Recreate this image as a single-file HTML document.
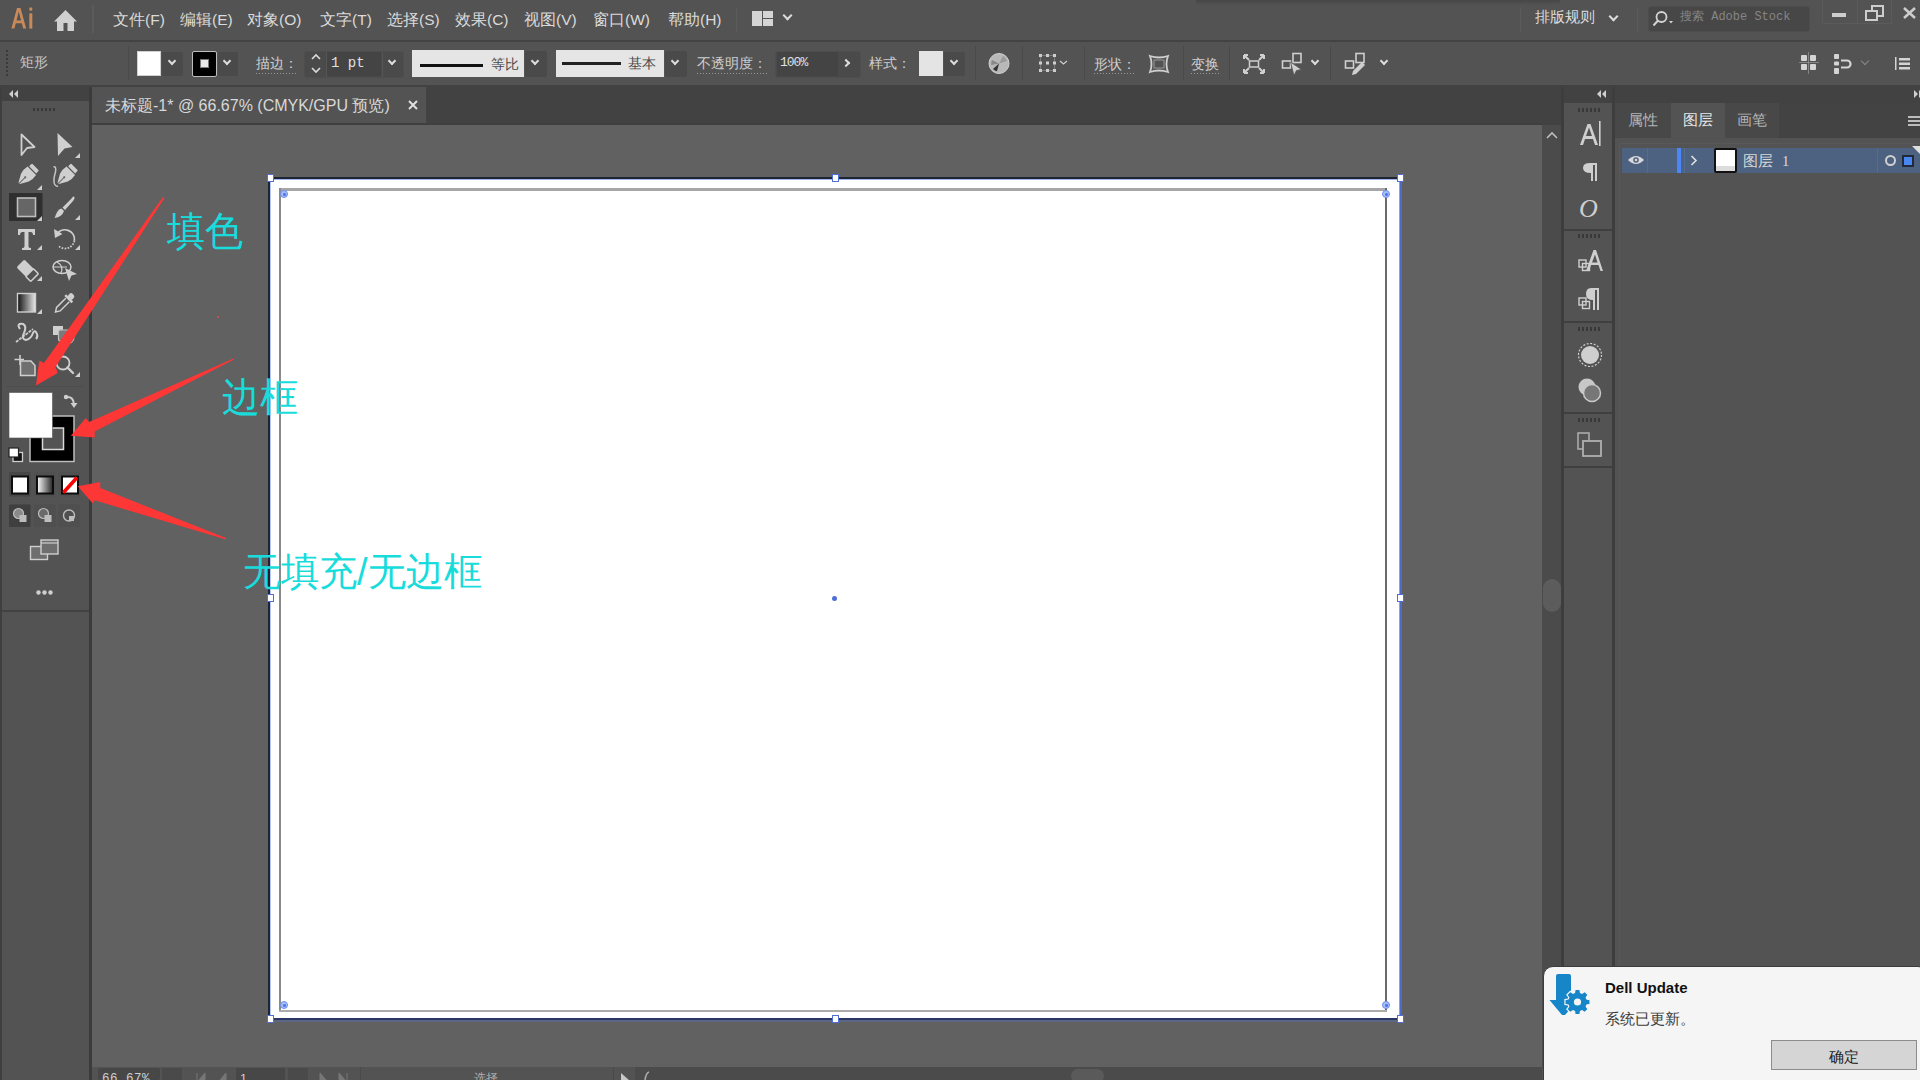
<!DOCTYPE html>
<html><head><meta charset="utf-8">
<style>
*{margin:0;padding:0;box-sizing:border-box}
html,body{width:1920px;height:1080px;overflow:hidden;background:#535353;font-family:"Liberation Sans",sans-serif;color:#d4d4d4}
.a{position:absolute}
.t{position:absolute;white-space:nowrap;line-height:1}
.sep{position:absolute;width:1px;background:#474747}
.chev{position:absolute;width:7px;height:7px;border-right:2px solid #dcdcdc;border-bottom:2px solid #dcdcdc;transform:rotate(45deg)}
.dd{position:absolute;background:#4a4a4a;border-radius:2px}
svg{position:absolute;overflow:visible}
</style></head><body>

<!-- ===== MENU BAR ===== -->
<div class="a" style="left:0;top:0;width:1920px;height:40px;background:#535353"></div>
<div class="a" style="left:1196px;top:0;width:364px;height:5px;background:linear-gradient(#464646,#535353);border-radius:0 0 4px 4px"></div>
<div class="a" style="left:0;top:40px;width:1920px;height:2px;background:#434343"></div>


<!-- menu content -->
<svg style="left:0;top:0" width="40" height="36" viewBox="0 0 40 36"><path d="M17 8 H20.5 L26.2 28.6 H23.2 L21.8 23.2 H15.8 L14.4 28.6 H11.4 Z M16.5 20.6 H21.1 L18.8 11.5 Z" fill="#c98a5a"/><rect x="29.3" y="13.3" width="3" height="15.3" fill="#c98a5a"/><rect x="29.3" y="7.6" width="3" height="3.2" rx="1" fill="#c98a5a"/></svg>
<svg style="left:54px;top:10px" width="23" height="22" viewBox="0 0 23 22"><path d="M11.5 0 L23 11.5 L20 11.5 L20 21 L13.5 21 L13.5 13 L9.5 13 L9.5 21 L3 21 L3 11.5 L0 11.5 Z" fill="#d0d0d0"/></svg>
<div class="a" style="left:92px;top:5px;width:2px;height:28px;background:#5b5b5b"></div>
<div class="t" style="left:113px;top:12px;font-size:15.5px;color:#dadada">文件(F)</div>
<div class="t" style="left:180px;top:12px;font-size:15.5px;color:#dadada">编辑(E)</div>
<div class="t" style="left:247px;top:12px;font-size:15.5px;color:#dadada">对象(O)</div>
<div class="t" style="left:320px;top:12px;font-size:15.5px;color:#dadada">文字(T)</div>
<div class="t" style="left:387px;top:12px;font-size:15.5px;color:#dadada">选择(S)</div>
<div class="t" style="left:455px;top:12px;font-size:15.5px;color:#dadada">效果(C)</div>
<div class="t" style="left:524px;top:12px;font-size:15.5px;color:#dadada">视图(V)</div>
<div class="t" style="left:593px;top:12px;font-size:15.5px;color:#dadada">窗口(W)</div>
<div class="t" style="left:668px;top:12px;font-size:15.5px;color:#dadada">帮助(H)</div>
<div class="a" style="left:736px;top:7px;width:1px;height:26px;background:#5b5b5b"></div>
<div class="a" style="left:752px;top:11px;width:10px;height:15px;background:#d4d4d4"></div>
<div class="a" style="left:763px;top:11px;width:10px;height:7px;background:#d4d4d4"></div>
<div class="a" style="left:763px;top:19px;width:10px;height:7px;background:#d4d4d4"></div>
<div class="chev" style="left:784px;top:12px"></div>
<div class="t" style="left:1535px;top:9px;font-size:15px;color:#dcdcdc">排版规则</div>
<div class="chev" style="left:1610px;top:13px"></div>
<div class="a" style="left:1520px;top:7px;width:1px;height:26px;background:#5b5b5b"></div>
<div class="a" style="left:1637px;top:7px;width:1px;height:26px;background:#5b5b5b"></div>
<div class="a" style="left:1648px;top:6px;width:162px;height:26px;background:#474747;border:1px solid #4d4d4d;border-radius:3px"></div>
<svg style="left:1652px;top:10px" width="22" height="18" viewBox="0 0 22 18"><circle cx="9.5" cy="7" r="5" fill="none" stroke="#d4d4d4" stroke-width="1.8"/><path d="M6 10.5 L1.5 15.5" stroke="#d4d4d4" stroke-width="2"/><path d="M17 11 L21 11 L19 13.5 Z" fill="#d4d4d4"/></svg>
<div class="t" style="left:1680px;top:11px;font-size:12px;color:#858585;font-family:'Liberation Mono',monospace">搜索 Adobe Stock</div>
<div class="a" style="left:1822px;top:0px;width:70px;height:24px;border:1px solid #5b5b5b;border-top:none;border-radius:0 0 3px 3px"></div>
<div class="a" style="left:1857px;top:0px;width:1px;height:24px;background:#5b5b5b"></div>
<div class="a" style="left:1891px;top:0px;width:1px;height:24px;background:#5b5b5b"></div>
<div class="a" style="left:1832px;top:13px;width:14px;height:4px;background:#cdcdcd"></div>
<div class="a" style="left:1871px;top:5px;width:13px;height:12px;border:2.5px solid #cdcdcd"></div>
<div class="a" style="left:1865px;top:10px;width:13px;height:11px;border:2.5px solid #cdcdcd;background:#535353"></div>
<svg style="left:1903px;top:7px" width="13" height="12" viewBox="0 0 13 12"><path d="M1 1 L12 11 M12 1 L1 11" stroke="#cdcdcd" stroke-width="2.5"/></svg>

<!-- CONTROL BAR -->
<div class="a" style="left:0;top:42px;width:1920px;height:43px;background:#535353"></div>
<div class="a" style="left:0;top:85px;width:1920px;height:2px;background:#424242"></div>


<!-- control content -->
<div class="a" style="left:6px;top:50px;width:2px;height:27px;background:repeating-linear-gradient(#3a3a3a 0 2px,transparent 2px 4px)"></div>
<div class="t" style="left:20px;top:55px;font-size:14px;color:#c8c8c8">矩形</div>
<div class="a" style="left:128px;top:46px;width:1px;height:34px;background:#4b4b4b"></div>
<div class="a" style="left:137px;top:51px;width:24px;height:25px;background:#ffffff;border:1px solid #d0d0d0"></div>
<div class="dd" style="left:162px;top:52px;width:21px;height:24px"></div>
<div class="chev" style="left:169px;top:58px;width:6px;height:6px"></div>
<div class="a" style="left:192px;top:51px;width:25px;height:26px;background:#000;border:1.5px solid #bdbdbd;border-radius:2px"></div>
<div class="a" style="left:200px;top:59px;width:9px;height:9px;background:#e8e8e8;border:1.5px solid #777"></div>
<div class="dd" style="left:218px;top:52px;width:20px;height:24px"></div>
<div class="chev" style="left:224px;top:58px;width:6px;height:6px"></div>

<div class="t" style="left:256px;top:56px;font-size:14px;color:#cfcfcf">描边：</div>
<div class="a" style="left:256px;top:73px;width:42px;height:1px;background:repeating-linear-gradient(90deg,#9a9a9a 0 1px,transparent 1px 3px)"></div>
<div class="a" style="left:304px;top:51px;width:100px;height:27px;background:#4a4a4a;border:1px solid #4e4e4e;border-radius:3px"></div>
<div class="a" style="left:326px;top:52px;width:1px;height:25px;background:#555"></div>
<div class="a" style="left:327px;top:52px;width:54px;height:24px;background:#444"></div>
<div class="a" style="left:382px;top:52px;width:1px;height:25px;background:#555"></div>
<svg style="left:310px;top:53px" width="12" height="21" viewBox="0 0 12 21"><path d="M2 6 L6 2 L10 6 M2 15 L6 19 L10 15" fill="none" stroke="#dcdcdc" stroke-width="1.6"/></svg>
<div class="t" style="left:331px;top:56px;font-size:14px;color:#e0e0e0;font-family:'Liberation Mono',monospace">1 pt</div>
<div class="chev" style="left:389px;top:58px;width:6px;height:6px"></div>

<div class="a" style="left:412px;top:50px;width:112px;height:27px;background:#e5e5e5"></div>
<div class="a" style="left:420px;top:64px;width:63px;height:3px;background:#111"></div>
<div class="t" style="left:491px;top:57px;font-size:14px;color:#4a4a4a">等比</div>
<div class="dd" style="left:525px;top:51px;width:22px;height:26px"></div>
<div class="chev" style="left:532px;top:58px;width:6px;height:6px"></div>
<div class="a" style="left:556px;top:50px;width:108px;height:27px;background:#e5e5e5"></div>
<div class="a" style="left:562px;top:62px;width:59px;height:3px;background:#222"></div>
<div class="t" style="left:628px;top:56px;font-size:14px;color:#4a4a4a">基本</div>
<div class="dd" style="left:665px;top:51px;width:22px;height:26px"></div>
<div class="chev" style="left:672px;top:58px;width:6px;height:6px"></div>

<div class="t" style="left:697px;top:56px;font-size:14px;color:#cfcfcf">不透明度：</div>
<div class="a" style="left:697px;top:73px;width:70px;height:1px;background:repeating-linear-gradient(90deg,#9a9a9a 0 1px,transparent 1px 3px)"></div>
<div class="a" style="left:775px;top:51px;width:86px;height:27px;background:#4a4a4a;border:1px solid #4e4e4e;border-radius:3px"></div>
<div class="a" style="left:777px;top:52px;width:61px;height:24px;background:#444"></div>
<div class="t" style="left:780px;top:56px;font-size:13px;color:#e0e0e0;font-family:'Liberation Mono',monospace;letter-spacing:-1px">100%</div>
<div class="chev" style="left:843px;top:60px;width:6px;height:6px;transform:rotate(-45deg)"></div>
<div class="t" style="left:869px;top:56px;font-size:14px;color:#cfcfcf">样式：</div>
<div class="a" style="left:919px;top:51px;width:24px;height:25px;background:#e4e4e4"></div>
<div class="dd" style="left:944px;top:52px;width:21px;height:24px"></div>
<div class="chev" style="left:951px;top:58px;width:6px;height:6px"></div>
<div class="a" style="left:975px;top:46px;width:1px;height:34px;background:#4a4a4a"></div>
<svg style="left:988px;top:52px" width="22" height="23" viewBox="0 0 22 23"><circle cx="11" cy="11.5" r="10" fill="#b8b8b8" stroke="#d0d0d0" stroke-width="1"/><path d="M11 11.5 L5 17 A8 8 0 0 0 9 19.3 Z" fill="#333"/><path d="M11 11.5 L4 8 A8 8 0 0 0 3.2 13 Z" fill="#888"/><path d="M11 11.5 L15 4 A8 8 0 0 1 19 9 Z" fill="#9a9a9a"/></svg>
<div class="a" style="left:1022px;top:46px;width:1px;height:34px;background:#4a4a4a"></div>
<svg style="left:1038px;top:53px" width="32" height="21" viewBox="0 0 32 21"><g fill="#d0d0d0"><rect x="1" y="1" width="3" height="3"/><rect x="8" y="1" width="3" height="3"/><rect x="15" y="1" width="3" height="3"/><rect x="1" y="8.5" width="3" height="3"/><rect x="8" y="8.5" width="3" height="3"/><rect x="15" y="8.5" width="3" height="3"/><rect x="1" y="16" width="3" height="3"/><rect x="8" y="16" width="3" height="3"/><rect x="15" y="16" width="3" height="3"/></g><path d="M2.5 2.5 H16.5 V17.5 H2.5 Z" fill="none" stroke="#bdbdbd" stroke-width="0.8" stroke-dasharray="1 1"/><path d="M22 8 L25.5 11 L29 8" fill="none" stroke="#cfcfcf" stroke-width="1.2"/></svg>
<div class="a" style="left:1084px;top:46px;width:1px;height:34px;background:#4a4a4a"></div>
<div class="t" style="left:1094px;top:57px;font-size:14px;color:#cfcfcf">形状：</div>
<div class="a" style="left:1094px;top:73px;width:42px;height:1px;background:repeating-linear-gradient(90deg,#9a9a9a 0 1px,transparent 1px 3px)"></div>
<svg style="left:1148px;top:54px" width="22" height="20" viewBox="0 0 22 20"><path d="M2 2 Q11 5 20 2 Q17 10 20 18 Q11 15 2 18 Q5 10 2 2 Z" fill="none" stroke="#cfcfcf" stroke-width="1.8"/><rect x="6" y="6" width="10" height="8" fill="none" stroke="#999" stroke-width="1"/></svg>
<div class="a" style="left:1183px;top:46px;width:1px;height:34px;background:#4a4a4a"></div>
<div class="t" style="left:1191px;top:57px;font-size:14px;color:#cfcfcf">变换</div>
<div class="a" style="left:1191px;top:73px;width:30px;height:1px;background:repeating-linear-gradient(90deg,#9a9a9a 0 1px,transparent 1px 3px)"></div>
<div class="a" style="left:1229px;top:46px;width:1px;height:34px;background:#4a4a4a"></div>
<svg style="left:1243px;top:54px" width="22" height="20" viewBox="0 0 22 20"><g stroke="#d0d0d0" stroke-width="2" fill="none"><path d="M1 1 L6 6 M1 1 V5 M1 1 H5"/><path d="M21 1 L16 6 M21 1 V5 M21 1 H17"/><path d="M1 19 L6 14 M1 19 V15 M1 19 H5"/><path d="M21 19 L16 14 M21 19 V15 M21 19 H17"/></g><rect x="6.5" y="7" width="9" height="6" fill="none" stroke="#cfcfcf" stroke-width="1.5"/></svg>
<svg style="left:1281px;top:52px" width="26" height="24" viewBox="0 0 26 24"><rect x="1.5" y="9" width="8" height="7" fill="none" stroke="#cfcfcf" stroke-width="1.6"/><rect x="12" y="1.5" width="8" height="9" fill="none" stroke="#cfcfcf" stroke-width="1.6"/><path d="M9.5 10 L20.5 17.5 L15.5 18.5 L13 23.5 Z" fill="#cfcfcf" stroke="#535353" stroke-width="0.8"/></svg>
<div class="chev" style="left:1312px;top:58px;width:6px;height:6px"></div>
<div class="a" style="left:1330px;top:46px;width:1px;height:34px;background:#4a4a4a"></div>
<svg style="left:1344px;top:52px" width="24" height="24" viewBox="0 0 24 24"><rect x="1.5" y="9" width="8" height="7" fill="none" stroke="#cfcfcf" stroke-width="1.6"/><rect x="12" y="1.5" width="8" height="9" fill="none" stroke="#cfcfcf" stroke-width="1.6"/><path d="M18 10 L21 13 L12 22 L8 23 L9 19 Z" fill="#cfcfcf"/></svg>
<div class="chev" style="left:1381px;top:58px;width:6px;height:6px"></div>

<svg style="left:1799px;top:52px" width="20" height="22" viewBox="0 0 20 22"><g fill="#d4d4d4"><rect x="2" y="3" width="6" height="6" rx="1"/><rect x="11" y="3" width="6" height="6" rx="1"/><rect x="2" y="12" width="6" height="6" rx="1"/><rect x="11" y="12" width="6" height="6" rx="1"/></g><path d="M9.5 0 V22 M0 10.5 H20" stroke="#8f8f8f" stroke-width="0.8"/></svg>
<svg style="left:1833px;top:53px" width="22" height="22" viewBox="0 0 22 22"><g fill="#d4d4d4"><rect x="1" y="1" width="5" height="5" rx="1"/><rect x="1" y="8.5" width="5" height="4" rx="1"/><rect x="1" y="15" width="5" height="6" rx="1"/></g><path d="M8 7.5 H14 A3.5 3.5 0 0 1 14 14.5 H8" fill="none" stroke="#d4d4d4" stroke-width="2.2"/></svg>
<div class="chev" style="left:1862px;top:58px;width:6px;height:6px;border-color:#8a8a8a;border-width:1px"></div>
<svg style="left:1894px;top:57px" width="16" height="14" viewBox="0 0 16 14"><g fill="#d4d4d4"><rect x="5" y="1" width="11" height="2.5"/><rect x="5" y="5.5" width="11" height="2.5"/><rect x="5" y="10" width="11" height="2.5"/><rect x="1" y="0" width="1.5" height="13"/></g></svg>

<!-- TAB BAR / DARK STRIP -->
<div class="a" style="left:0;top:87px;width:1920px;height:38px;background:#424242"></div>


<!-- tab -->
<div class="a" style="left:92px;top:87px;width:334px;height:36px;background:#535353"></div>
<div class="a" style="left:92px;top:123px;width:1450px;height:2px;background:#3f3f3f"></div>
<div class="t" style="left:105px;top:98px;font-size:16px;color:#d8d8d8">未标题-1* @ 66.67% (CMYK/GPU 预览)</div>
<svg style="left:408px;top:100px" width="10" height="10" viewBox="0 0 10 10"><path d="M1 1 L9 9 M9 1 L1 9" stroke="#e0e0e0" stroke-width="2"/></svg>
<svg style="left:9px;top:90px" width="10" height="8" viewBox="0 0 10 8"><path d="M4 0 L0 4 L4 8 Z M9 0 L5 4 L9 8 Z" fill="#cfcfcf"/></svg>

<svg style="left:1597px;top:90px" width="10" height="8" viewBox="0 0 10 8"><path d="M4 0 L0 4 L4 8 Z M9 0 L5 4 L9 8 Z" fill="#cfcfcf"/></svg>
<svg style="left:1913px;top:90px" width="10" height="8" viewBox="0 0 10 8"><path d="M1 0 L5 4 L1 8 Z M6 0 L10 4 L6 8 Z" fill="#cfcfcf"/></svg>

<!-- CANVAS -->
<div class="a" style="left:92px;top:125px;width:1450px;height:942px;background:#616161"></div>


<!-- artboard -->
<div class="a" style="left:270px;top:179px;width:1130px;height:840px;background:#fff"></div>
<div class="a" style="left:268px;top:177px;width:1132px;height:2px;background:#1f2433"></div>
<div class="a" style="left:270px;top:179px;width:1129px;height:1px;background:#9fb4ef"></div>
<div class="a" style="left:268px;top:177px;width:2px;height:843px;background:#1f2433"></div>
<div class="a" style="left:270px;top:180px;width:1px;height:838px;background:#b8c8f5"></div>
<div class="a" style="left:1399px;top:177px;width:1px;height:843px;background:#8ea3de"></div><div class="a" style="left:1400px;top:177px;width:2px;height:843px;background:#4d6bc4"></div>
<div class="a" style="left:268px;top:1018px;width:1134px;height:2px;background:#2a3766"></div>
<div class="a" style="left:268px;top:1020px;width:1134px;height:2px;background:#5d6784"></div>
<!-- rectangle stroke -->
<div class="a" style="left:279px;top:188px;width:1108px;height:3px;background:#a6a6a6"></div>
<div class="a" style="left:279px;top:188px;width:2px;height:824px;background:#8a8a8a"></div>
<div class="a" style="left:1385px;top:188px;width:2px;height:824px;background:#6a6a6a"></div>
<div class="a" style="left:279px;top:1010px;width:1108px;height:2px;background:#ababab"></div>
<!-- live corners -->
<div class="a" style="left:280px;top:190px;width:8px;height:8px;border-radius:50%;background:#a9bdf7;border:1.6px solid #6a8df2"></div><div class="a" style="left:283px;top:193px;width:2.5px;height:2.5px;border-radius:50%;background:#4f78ee"></div>
<div class="a" style="left:1382px;top:190px;width:8px;height:8px;border-radius:50%;background:#a9bdf7;border:1.6px solid #6a8df2"></div><div class="a" style="left:1385px;top:193px;width:2.5px;height:2.5px;border-radius:50%;background:#4f78ee"></div>
<div class="a" style="left:280px;top:1001px;width:8px;height:8px;border-radius:50%;background:#a9bdf7;border:1.6px solid #6a8df2"></div><div class="a" style="left:283px;top:1004px;width:2.5px;height:2.5px;border-radius:50%;background:#4f78ee"></div>
<div class="a" style="left:1382px;top:1001px;width:8px;height:8px;border-radius:50%;background:#a9bdf7;border:1.6px solid #6a8df2"></div><div class="a" style="left:1385px;top:1004px;width:2.5px;height:2.5px;border-radius:50%;background:#4f78ee"></div>
<!-- handles -->
<div class="a" style="left:267px;top:174px;width:7px;height:8px;background:#fff;border:1.5px solid #4f6fd6"></div>
<div class="a" style="left:832px;top:174px;width:7px;height:8px;background:#fff;border:1.5px solid #4f6fd6"></div>
<div class="a" style="left:1397px;top:174px;width:7px;height:8px;background:#fff;border:1.5px solid #4f6fd6"></div>
<div class="a" style="left:267px;top:594px;width:7px;height:8px;background:#fff;border:1.5px solid #4f6fd6"></div>
<div class="a" style="left:1397px;top:594px;width:7px;height:8px;background:#fff;border:1.5px solid #4f6fd6"></div>
<div class="a" style="left:267px;top:1015px;width:7px;height:8px;background:#fff;border:1.5px solid #4f6fd6"></div>
<div class="a" style="left:832px;top:1015px;width:7px;height:8px;background:#fff;border:1.5px solid #4f6fd6"></div>
<div class="a" style="left:1397px;top:1015px;width:7px;height:8px;background:#fff;border:1.5px solid #4f6fd6"></div>
<div class="a" style="left:832px;top:596px;width:5px;height:5px;border-radius:50%;background:#4f6fd6"></div>
<div class="a" style="left:217px;top:316px;width:2px;height:2px;border-radius:50%;background:#e04a4a"></div>

<!-- annotations -->
<div class="t" style="left:167px;top:211px;font-size:38px;color:#18dcdc;transform:scaleY(1.05);transform-origin:0 0">填色</div>
<div class="t" style="left:222px;top:377px;font-size:38px;color:#18dcdc;transform:scaleY(1.05);transform-origin:0 0">边框</div>
<div class="t" style="left:243px;top:552px;font-size:38px;color:#18dcdc;transform:scaleY(1.02);transform-origin:0 0">无填充/无边框</div>

<!-- LEFT TOOLBAR -->
<div class="a" style="left:0;top:87px;width:2px;height:993px;background:#3f3f3f"></div>
<div class="a" style="left:2px;top:101px;width:87px;height:979px;background:#535353"></div>
<div class="a" style="left:89px;top:87px;width:3px;height:993px;background:#3b3b3b"></div>
<div class="a" style="left:2px;top:610px;width:87px;height:2px;background:#424242"></div>


<!-- toolbar icons -->
<div class="a" style="left:33px;top:108px;width:24px;height:3px;background:repeating-linear-gradient(90deg,#383838 0 2px,transparent 2px 4px)"></div>
<svg style="left:0;top:100px" width="92" height="512" viewBox="0 100 92 512">
<g fill="#cfcfcf" stroke="none">
<!-- corner triangles -->
<path d="M80 153 L80 158 L75 158 Z"/>
<path d="M42 185 L42 190 L37 190 Z"/>
<path d="M80 215 L80 220 L75 220 Z"/>
<path d="M42 245 L42 250 L37 250 Z"/>
<path d="M80 245 L80 250 L75 250 Z"/>
<path d="M42 276 L42 281 L37 281 Z"/>
<path d="M42 309 L42 314 L37 314 Z"/>
<path d="M80 372 L80 377 L75 377 Z"/>
</g>
<!-- selection hollow -->
<path d="M21.5 134.5 L34.5 147 L27 148 L21.5 155 Z" fill="none" stroke="#cfcfcf" stroke-width="1.8" stroke-linejoin="round"/>
<!-- direct selection filled -->
<path d="M57.5 133 L72.5 147 L64.5 148.5 L58 156 Z" fill="#cfcfcf"/>
<!-- pen -->
<g transform="translate(27 175.5) rotate(45)"><path d="M-4.2 -12 H4.2 Q5 -12 5 -10.5 V-8 H-5 V-10.5 Q-5 -12 -4.2 -12 Z M-6 -6.8 H6 Q7.2 -1 5.5 3 L1 11 H-1 L-5.5 3 Q-7.2 -1 -6 -6.8 Z" fill="#cfcfcf"/><path d="M0 11 V3" stroke="#6a6a6a" stroke-width="1"/><circle cx="0" cy="2.5" r="1.1" fill="#6a6a6a"/></g>
<!-- curvature -->
<g transform="translate(66 175.5) rotate(45)"><path d="M-4.2 -12 H4.2 Q5 -12 5 -10.5 V-8 H-5 V-10.5 Q-5 -12 -4.2 -12 Z M-6 -6.8 H6 Q7.2 -1 5.5 3 L1 11 H-1 L-5.5 3 Q-7.2 -1 -6 -6.8 Z" fill="#cfcfcf"/><path d="M0 11 V3" stroke="#6a6a6a" stroke-width="1"/><circle cx="0" cy="2.5" r="1.1" fill="#6a6a6a"/></g>
<path d="M53.5 167 Q56.5 166 55.5 172 Q53 180 54.5 184 Q56 187 58 186" fill="none" stroke="#c4c4c4" stroke-width="1.5"/>
<!-- rect tool highlighted -->
<rect x="9" y="193" width="33.5" height="28" fill="#2f2f2f"/>
<path d="M42 216 L42 221 L37 221 Z" fill="#cfcfcf"/>
<rect x="17.5" y="198" width="18" height="18.5" fill="#666" stroke="#bdbdbd" stroke-width="1.6"/>
<!-- paintbrush -->
<path d="M74 196.5 Q75.5 198 73 201 L65 210 L62.5 207.5 L71.5 198.5 Q73 196 74 196.5 Z" fill="#cfcfcf"/>
<path d="M61.5 208.5 L64 211 Q62 217 54.5 218 Q56 214 57.5 211.5 Q59 209 61.5 208.5 Z" fill="#cfcfcf"/>
<!-- type T -->
<path d="M18 229 H35 V235 H33 Q33 232 30.5 232 H28.5 V246.5 Q28.5 248 31 248 V250 H22 V248 Q24.5 248 24.5 246.5 V232 H22.5 Q20 232 20 235 H18 Z" fill="#cfcfcf"/>
<!-- rotate -->
<path d="M57.5 233.5 A9.5 9.5 0 0 1 74.4 240.6" fill="none" stroke="#cfcfcf" stroke-width="1.8"/><path d="M74.4 240.6 A9.5 9.5 0 0 1 58.9 246.3" fill="none" stroke="#cfcfcf" stroke-width="1.8" stroke-dasharray="1.6 1.4"/>
<path d="M54 229 L55 238 L62.5 234 Z" fill="#cfcfcf"/>
<!-- eraser -->
<g transform="translate(27.5 270.5) rotate(-45)"><rect x="-5.5" y="-10" width="11" height="20" rx="1.5" fill="#cfcfcf"/><rect x="-5.5" y="3" width="11" height="7" rx="1" fill="#535353" stroke="#cfcfcf" stroke-width="1.5"/></g>
<!-- shape builder -->
<ellipse cx="62" cy="267" rx="9" ry="6.5" fill="none" stroke="#cfcfcf" stroke-width="1.5"/>
<path d="M57 262 Q64 266 61 273 M53 267 H67" fill="none" stroke="#cfcfcf" stroke-width="1.2"/>
<path d="M65 268 L77 274 L71.5 275.5 L69 281 Z" fill="#cfcfcf"/>
<!-- gradient -->
<defs><linearGradient id="gr" x1="0" x2="1"><stop offset="0" stop-color="#111"/><stop offset="1" stop-color="#e8e8e8"/></linearGradient>
<linearGradient id="gr2" x1="0" x2="1"><stop offset="0" stop-color="#fff"/><stop offset="1" stop-color="#222"/></linearGradient></defs>
<rect x="17.5" y="293.5" width="18" height="18.5" fill="url(#gr)" stroke="#cfcfcf" stroke-width="1.4"/>
<!-- eyedropper -->
<g transform="translate(64 303.5) rotate(45)"><rect x="-3" y="-13" width="6" height="6" rx="2.5" fill="#cfcfcf"/><rect x="-5" y="-8" width="10" height="2.5" fill="#cfcfcf"/><path d="M-2.5 -5 V8 L0 12 L2.5 8 V-5" fill="none" stroke="#cfcfcf" stroke-width="1.5"/></g>
<!-- puppet warp -->
<path d="M20 329 Q16 323 23 324 Q27 326 24 333 Q21 339 26 340 Q31 339 33 333 Q35 329 37 334 Q38 337 36 339" fill="none" stroke="#cfcfcf" stroke-width="2"/>
<path d="M16 342 L33 329" stroke="#cfcfcf" stroke-width="1.8" stroke-dasharray="3 1"/>
<!-- live paint bucket -->
<rect x="53" y="326" width="10" height="9" fill="#cfcfcf"/>
<rect x="58.5" y="330" width="12" height="11" rx="2" fill="#7a7a7a" stroke="#bdbdbd" stroke-width="1.2"/>
<path d="M66 343 A6 6 0 0 0 74 337" fill="none" stroke="#bdbdbd" stroke-width="1.2"/>
<!-- artboard -->
<path d="M14.5 359.5 H24 M20 355 V365" stroke="#cfcfcf" stroke-width="1.6"/>
<path d="M20.5 361 H31 L35 365.5 V375.5 H20.5 Z" fill="#707070" stroke="#cfcfcf" stroke-width="1.5"/>
<!-- zoom -->
<circle cx="63" cy="363" r="6.5" fill="none" stroke="#cfcfcf" stroke-width="1.8"/>
<path d="M67.5 367.5 L73 373" stroke="#cfcfcf" stroke-width="2.4" stroke-linecap="round"/>
<!-- separator -->
<rect x="6" y="386" width="77" height="1" fill="#4c4c4c"/>
<!-- fill / stroke -->
<rect x="30" y="416" width="44" height="45.5" fill="#000" stroke="#bdbdbd" stroke-width="1.5"/>
<rect x="42.5" y="428" width="21" height="21.5" fill="#535353" stroke="#d8d8d8" stroke-width="1.5"/>
<rect x="9" y="392.5" width="43.5" height="45.5" fill="#fff" stroke="#555" stroke-width="0.6"/>
<!-- swap -->
<path d="M66.5 397 Q73 396 74 404" fill="none" stroke="#cfcfcf" stroke-width="2"/>
<circle cx="66" cy="397" r="2.2" fill="#cfcfcf"/>
<path d="M70.5 403 L77.5 403 L74 408 Z" fill="#cfcfcf"/>
<!-- default -->
<rect x="13" y="452.5" width="9.5" height="9" fill="#111" stroke="#cfcfcf" stroke-width="1.3"/>
<rect x="9" y="448" width="9.5" height="9" fill="#fff" stroke="#222" stroke-width="1.2"/>
<!-- mode buttons -->
<rect x="9" y="472" width="21.5" height="24.5" rx="1" fill="#474747"/>
<rect x="34" y="472" width="21.5" height="24.5" rx="1" fill="#505050"/>
<rect x="58.5" y="472" width="21.5" height="24.5" rx="1" fill="#505050"/>
<rect x="12" y="476.5" width="16" height="17" fill="#fff" stroke="#0d0d0d" stroke-width="2"/>
<rect x="37" y="476.5" width="16" height="17" fill="url(#gr2)" stroke="#0d0d0d" stroke-width="2"/>
<rect x="62" y="476.5" width="16" height="17" fill="#fff" stroke="#0d0d0d" stroke-width="2"/>
<path d="M63.5 492.5 L77 477.5" stroke="#ff0000" stroke-width="3.6"/>
<!-- draw modes -->
<rect x="9" y="504.5" width="21.5" height="22.5" rx="1" fill="#3f3f3f"/>
<rect x="34" y="504.5" width="21.5" height="22.5" rx="1" fill="#4f4f4f"/>
<rect x="58.5" y="504.5" width="21.5" height="22.5" rx="1" fill="#4f4f4f"/>
<circle cx="18.5" cy="513.5" r="5" fill="#8a8a8a" stroke="#bdbdbd" stroke-width="1.2"/><rect x="19.5" y="515" width="7" height="7" fill="#bdbdbd"/>
<circle cx="43.5" cy="513.5" r="5" fill="#6a6a6a" stroke="#bdbdbd" stroke-width="1.2"/><rect x="44.5" y="515" width="7" height="7" fill="#bdbdbd"/>
<circle cx="69" cy="515.5" r="5.5" fill="none" stroke="#bdbdbd" stroke-width="1.4"/><rect x="69" y="516" width="5" height="5" fill="#bdbdbd"/>
<!-- screen mode -->
<rect x="30.5" y="546.5" width="17" height="13" fill="#6e6e6e" stroke="#cfcfcf" stroke-width="1.4"/>
<rect x="41" y="540" width="17" height="14" fill="#6e6e6e" stroke="#cfcfcf" stroke-width="1.4"/>
<path d="M41 543 H58" stroke="#cfcfcf" stroke-width="1.2"/>
<!-- dots -->
<circle cx="38.5" cy="592.5" r="2.2" fill="#cfcfcf"/><circle cx="44.5" cy="592.5" r="2.2" fill="#cfcfcf"/><circle cx="50.5" cy="592.5" r="2.2" fill="#cfcfcf"/>
</svg>

<!-- RIGHT -->
<div class="a" style="left:1542px;top:125px;width:19px;height:942px;background:#4b4b4b"></div>
<div class="a" style="left:1561px;top:87px;width:3px;height:993px;background:#3d3d3d"></div>
<div class="a" style="left:1564px;top:103px;width:48px;height:977px;background:#535353"></div>
<div class="a" style="left:1612px;top:87px;width:3px;height:993px;background:#3d3d3d"></div>
<div class="a" style="left:1615px;top:138px;width:305px;height:942px;background:#535353"></div>

<!-- STATUS BAR -->
<div class="a" style="left:92px;top:1067px;width:1450px;height:13px;background:#535353"></div>



<!-- dock group separators -->
<div class="a" style="left:1564px;top:229px;width:48px;height:2px;background:#3f3f3f"></div>
<div class="a" style="left:1564px;top:321px;width:48px;height:2px;background:#3f3f3f"></div>
<div class="a" style="left:1564px;top:412px;width:48px;height:2px;background:#3f3f3f"></div>
<div class="a" style="left:1564px;top:466px;width:48px;height:2px;background:#3f3f3f"></div>
<div class="a" style="left:1578px;top:108px;width:22px;height:4px;background:repeating-linear-gradient(90deg,#383838 0 2px,transparent 2px 4px)"></div>
<div class="a" style="left:1578px;top:234px;width:22px;height:4px;background:repeating-linear-gradient(90deg,#383838 0 2px,transparent 2px 4px)"></div>
<div class="a" style="left:1578px;top:327px;width:22px;height:4px;background:repeating-linear-gradient(90deg,#383838 0 2px,transparent 2px 4px)"></div>
<div class="a" style="left:1578px;top:418px;width:22px;height:4px;background:repeating-linear-gradient(90deg,#383838 0 2px,transparent 2px 4px)"></div>
<svg style="left:1564px;top:100px" width="48" height="370" viewBox="1564 100 48 370">
<g fill="#cfcfcf">
<path d="M1580 145 L1587.5 124 L1590.5 124 L1598 145 L1595 145 L1593 139 L1585 139 L1583 145 Z M1586 136 L1592 136 L1589 127.5 Z"/>
<rect x="1599" y="121" width="1.6" height="25"/>
<path d="M1590 163 H1597 V181 H1595 V165 H1593 V181 H1591 V173 Q1583 173 1583 168 Q1583 163 1590 163 Z"/>
</g>
<text x="1579" y="217" font-family="Liberation Serif" font-style="italic" font-size="26" fill="#cfcfcf">O</text>
<g fill="#cfcfcf">
<path d="M1586 271 L1593.5 250 L1596 250 L1603 271 L1600.5 271 L1598.5 265 L1591 265 L1589 271 Z M1592 262.5 L1597.5 262.5 L1595 254.5 Z"/>
<path d="M1591 288 H1599 V310 H1597 V290 H1595 V310 H1593 V300 Q1586 300 1586 294 Q1586 288 1591 288 Z"/>
</g>
<g fill="none" stroke="#cfcfcf" stroke-width="1.4">
<rect x="1579" y="260" width="7" height="7"/><rect x="1582.5" y="263.5" width="7" height="7"/>
<rect x="1579" y="298" width="7" height="7"/><rect x="1582.5" y="301.5" width="7" height="7"/>
</g>
<circle cx="1590" cy="355" r="9" fill="#cfcfcf"/>
<circle cx="1590" cy="355" r="11.5" fill="none" stroke="#cfcfcf" stroke-width="1.2" stroke-dasharray="2 1.6"/>
<circle cx="1587" cy="387" r="8.5" fill="#c8c8c8"/>
<circle cx="1592" cy="393" r="8.5" fill="#777" stroke="#c8c8c8" stroke-width="1.5"/>
<rect x="1578" y="433" width="11" height="16" fill="none" stroke="#b0b0b0" stroke-width="1.5"/>
<rect x="1583" y="441" width="18" height="15" fill="#535353" stroke="#b0b0b0" stroke-width="1.8"/>
</g>
</svg>

<!-- right panel tabs -->
<div class="a" style="left:1615px;top:103px;width:305px;height:35px;background:#434343"></div>
<div class="a" style="left:1615px;top:103px;width:56px;height:35px;background:#484848"></div>
<div class="a" style="left:1671px;top:103px;width:54px;height:35px;background:#535353"></div>
<div class="a" style="left:1725px;top:103px;width:54px;height:35px;background:#484848"></div>
<div class="t" style="left:1628px;top:112px;font-size:15px;color:#b5b5b5">属性</div>
<div class="t" style="left:1683px;top:112px;font-size:15px;color:#e8e8e8">图层</div>
<div class="t" style="left:1737px;top:112px;font-size:15px;color:#b5b5b5">画笔</div>
<div class="a" style="left:1908px;top:116px;width:12px;height:2px;background:#bdbdbd"></div>
<div class="a" style="left:1908px;top:120px;width:12px;height:2px;background:#bdbdbd"></div>
<div class="a" style="left:1908px;top:124px;width:12px;height:2px;background:#bdbdbd"></div>
<div class="a" style="left:1619px;top:143px;width:301px;height:937px;border-left:1px solid #585858;border-top:1px solid #585858"></div>
<!-- layer row -->
<div class="a" style="left:1622px;top:148px;width:298px;height:25px;background:#4c6280"></div>
<div class="a" style="left:1647px;top:148px;width:1px;height:25px;background:#566c88"></div>
<div class="a" style="left:1684px;top:148px;width:1px;height:25px;background:#566c88"></div>
<div class="a" style="left:1877px;top:148px;width:1px;height:25px;background:#566c88"></div>
<svg style="left:1627px;top:154px" width="18" height="12" viewBox="0 0 18 12"><path d="M1 6 Q9 -2 17 6 Q9 14 1 6 Z" fill="#d8d8d8"/><circle cx="9" cy="6" r="2.8" fill="#4c6280"/><circle cx="9" cy="6" r="1.3" fill="#d8d8d8"/></svg>
<div class="a" style="left:1677px;top:148px;width:4px;height:25px;background:#4d86f7"></div>
<svg style="left:1690px;top:155px" width="8" height="11" viewBox="0 0 8 11"><path d="M1.5 1 L6 5.5 L1.5 10" fill="none" stroke="#e0e0e0" stroke-width="1.6"/></svg>
<div class="a" style="left:1714px;top:148px;width:23px;height:25px;background:linear-gradient(#fff 75%,#dcdcdc 75%);border:2px solid #111;border-radius:2px"></div>
<div class="t" style="left:1743px;top:154px;font-size:14.5px;color:#d8d8d8">图层<span style="font-family:'Liberation Serif',serif;margin-left:9px">1</span></div>
<div class="a" style="left:1885px;top:155px;width:11px;height:11px;border-radius:50%;border:2px solid #d0d0d0"></div>
<div class="a" style="left:1902px;top:155px;width:12px;height:12px;background:#4a86f0;border:2px solid #222a3a"></div>
<svg style="left:1912px;top:146px" width="8" height="8" viewBox="0 0 8 8"><path d="M0 0 H8 V8 Z" fill="#e0e0e0"/></svg>

<!-- canvas vertical scrollbar -->
<svg style="left:1546px;top:131px" width="12" height="8" viewBox="0 0 12 8"><path d="M1 7 L6 2 L11 7" fill="none" stroke="#bdbdbd" stroke-width="1.6"/></svg>
<div class="a" style="left:1543px;top:579px;width:18px;height:33px;border-radius:9px;background:#5c5c5c"></div>

<!-- status bar -->
<div class="a" style="left:635px;top:1067px;width:907px;height:13px;background:#4b4b4b"></div>
<div class="a" style="left:1071px;top:1069px;width:33px;height:14px;border-radius:7px;background:#5a5a5a"></div>
<div class="a" style="left:98px;top:1068px;width:62px;height:12px;background:#474747;border-radius:2px"></div>
<div class="t" style="left:102px;top:1073px;font-size:12.5px;color:#d0d0d0;font-family:'Liberation Mono',monospace;letter-spacing:0.5px">66.67%</div>
<div class="a" style="left:162px;top:1068px;width:20px;height:12px;background:#4a4a4a"></div>
<div class="a" style="left:236px;top:1068px;width:49px;height:12px;background:#474747"></div>
<div class="t" style="left:240px;top:1073px;font-size:12.5px;color:#d0d0d0">1</div>
<div class="a" style="left:288px;top:1068px;width:20px;height:12px;background:#4a4a4a"></div>
<div class="a" style="left:360px;top:1067px;width:1px;height:13px;background:#4a4a4a"></div>
<div class="a" style="left:613px;top:1067px;width:1px;height:13px;background:#4a4a4a"></div>
<div class="t" style="left:474px;top:1072px;font-size:12px;color:#b0b0b0">选择</div>
<svg style="left:621px;top:1073px" width="10" height="8" viewBox="0 0 10 8"><path d="M0 0 L9 8 H0 Z" fill="#c8c8c8"/></svg>
<svg style="left:643px;top:1071px" width="8" height="9" viewBox="0 0 8 9"><path d="M6 1 Q3 2 2 9" fill="none" stroke="#aaa" stroke-width="1.6"/></svg>
<svg style="left:196px;top:1073px" width="40" height="7" viewBox="0 0 40 7"><path d="M1 0 V7 M3 7 L9 0 V7 Z M24 7 L30 0 V7 Z" fill="#777" stroke="#777" stroke-width="1"/></svg>
<svg style="left:318px;top:1073px" width="34" height="7" viewBox="0 0 34 7"><path d="M2 0 L8 7 H2 Z M21 0 L27 7 H21 Z M29 0 V7" fill="#777" stroke="#777" stroke-width="1"/></svg>

<!-- notification -->
<div class="a" style="left:1543px;top:966px;width:385px;height:130px;background:#f5f5f5;border-radius:10px;border:1.5px solid #3c3c3c"></div>
<svg style="left:0;top:0" width="1920" height="1080" viewBox="0 0 1920 1080"><rect x="1556" y="974" width="15" height="30" rx="2" fill="#1786c9"/><path d="M1549.5 1000 L1578 1000 L1565 1015 L1562 1015 Z" fill="#1786c9"/><path d="M1586.84 999.04 L1590.06 999.56 L1590.06 1004.44 L1586.84 1004.96 L1586.20 1006.51 L1588.11 1009.16 L1584.66 1012.61 L1582.01 1010.70 L1580.46 1011.34 L1579.94 1014.56 L1575.06 1014.56 L1574.54 1011.34 L1572.99 1010.70 L1570.34 1012.61 L1566.89 1009.16 L1568.80 1006.51 L1568.16 1004.96 L1564.94 1004.44 L1564.94 999.56 L1568.16 999.04 L1568.80 997.49 L1566.89 994.84 L1570.34 991.39 L1572.99 993.30 L1574.54 992.66 L1575.06 989.44 L1579.94 989.44 L1580.46 992.66 L1582.01 993.30 L1584.66 991.39 L1588.11 994.84 L1586.20 997.49 Z" fill="#1786c9" stroke="#f5f5f5" stroke-width="1.2"/><circle cx="1577.5" cy="1002" r="3.6" fill="#f5f5f5"/></svg>
<div class="t" style="left:1605px;top:980px;font-size:15px;font-weight:bold;color:#111">Dell Update</div>
<div class="t" style="left:1605px;top:1011px;font-size:15px;color:#3a3a3a">系统已更新。</div>
<div class="a" style="left:1771px;top:1040px;width:146px;height:30px;background:#d5d5d5;border:1px solid #8c8c8c"></div>
<div class="t" style="left:1829px;top:1049px;font-size:15px;color:#222">确定</div>

<!-- arrows -->
<svg style="left:0;top:0" width="1920" height="1080" viewBox="0 0 1920 1080">
<g fill="#fd3636">
<path d="M163 197 L44 363 L39.3 360.4 L36 385.4 L57.8 372.9 L55.5 367 L164.5 198 Z"/>
<path d="M233.5 358.5 L89 422 L85.8 418 L70.8 435.8 L94.7 437.6 L94.7 431.5 L234 359.5 Z"/>
<path d="M77.8 486.2 L100.3 482 L100.3 488 L226 538 L226 539.5 L94.7 500.3 L92.8 503.6 Z"/>
</g>
</svg>

</body></html>
